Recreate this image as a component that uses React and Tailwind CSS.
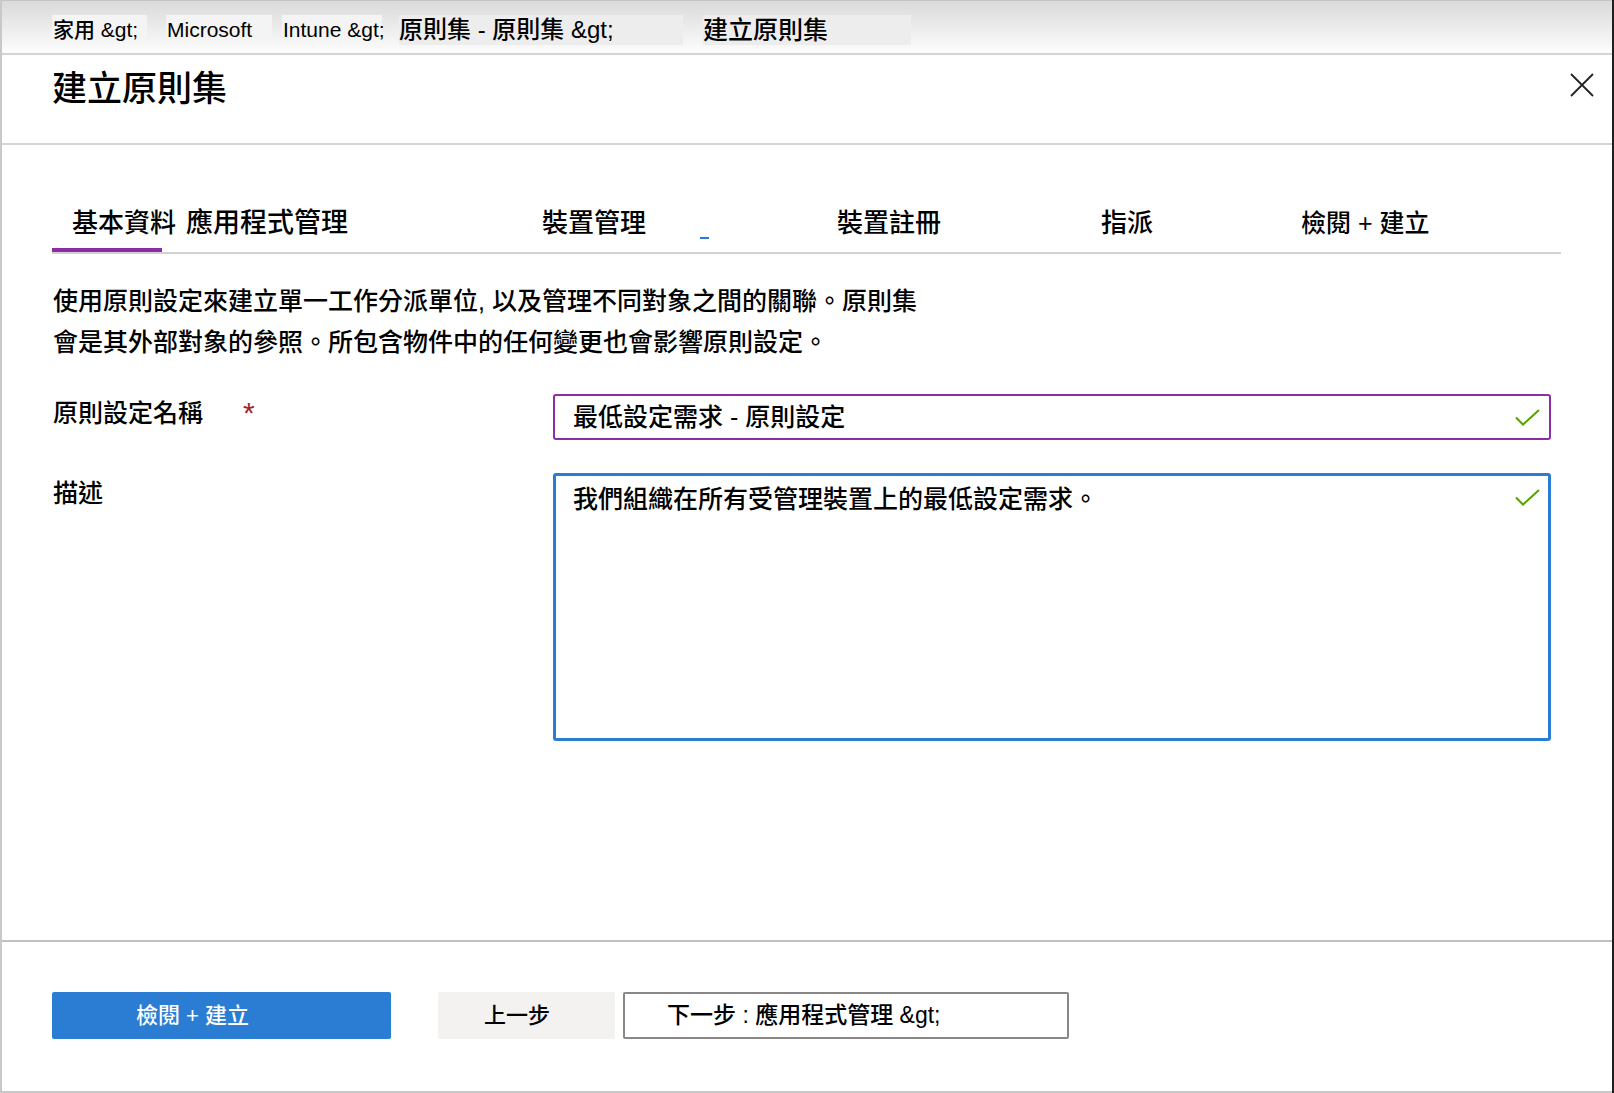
import React from 'react';

const TABS = [
  { label: '基本資料', w: 'w-[110px]', pl: 'pl-[20px]', size: 'text-[26px]', active: true },
  { label: '應用程式管理', w: 'w-[379px]', pl: 'pl-[24px]', size: 'text-[27px]' },
  { label: '裝置管理', w: 'w-[296px]', pl: 'pl-[1px]', size: 'text-[26px]', dash: true },
  { label: '裝置註冊', w: 'w-[264px]', pl: 'pl-0', size: 'text-[26px]' },
  { label: '指派', w: 'w-[200px]', pl: 'pl-0', size: 'text-[26px]' },
  { label: '檢閱 + 建立', w: 'w-[250px]', pl: 'pl-0', size: 'text-[25px]' },
];

function Check() {
  return (
    <svg width="25" height="17" viewBox="0 0 25 17" className="shrink-0">
      <polyline points="1,8.5 8,15.5 24,1" fill="none" stroke="#57a300" strokeWidth="2" />
    </svg>
  );
}

export default function App() {
  return (
    <div className="w-[1614px] h-[1093px] bg-white flex flex-col border-l-2 border-l-[#c8c8c8] border-r-2 border-r-[#1f1f1f] overflow-hidden text-black font-medium font-['Liberation_Sans','Noto_Sans_CJK_TC',sans-serif]">
      {/* Breadcrumb */}
      <div className="h-[55px] shrink-0 border-t border-t-[#c4c4c4] border-b-2 border-b-[#d4d4d4] bg-gradient-to-b from-[#dadada] to-[#fdfdfd] flex items-start pt-[14px] pl-[50px] whitespace-nowrap">
        <span className="w-[95px] h-[23px] bg-[#f4f4f4] text-[21px] leading-[29px] pl-[1px]">家用 &amp;gt;</span>
        <span className="ml-[19px] w-[106px] h-[23px] bg-[#f4f4f4] text-[21px] leading-[30px] pl-[1px]">Microsoft</span>
        <span className="ml-[10px] w-[100px] h-[23px] bg-[#f4f4f4] text-[21px] leading-[29px] pl-[1px]">Intune &amp;gt;</span>
        <span className="ml-[17px] w-[284px] h-[30px] bg-[#ededed] text-[24px] leading-[30px]">原則集 - 原則集 &amp;gt;</span>
        <span className="ml-[20px] w-[208px] h-[30px] bg-[#ededed] text-[25px] leading-[30px]">建立原則集</span>
      </div>

      {/* Title */}
      <div className="h-[90px] shrink-0 border-b-2 border-b-[#d4d4d4] flex items-start justify-between pl-[50px] pr-[18px] pt-[14px]">
        <h1 className="text-[35px] leading-[40px] font-medium">建立原則集</h1>
        <svg width="24" height="24" viewBox="0 0 24 24" className="mt-[4px]">
          <path d="M1 1 L23 23 M23 1 L1 23" stroke="#222" strokeWidth="1.8" fill="none" />
        </svg>
      </div>

      {/* Body */}
      <div className="flex-1 flex flex-col pl-[51px]">
        <div className="mt-[55px] -ml-[1px] w-[1509px] h-[54px] flex border-b-2 border-b-[#d2d2d2] whitespace-nowrap">
          {TABS.map((t) => (
            <div
              key={t.label}
              className={`relative h-[52px] shrink-0 pt-[8px] leading-[30px] ${t.size} ${t.w} ${t.pl} ${t.active ? 'border-b-4 border-b-[#8a2da6]' : ''}`}
            >
              {t.label}
              {t.dash && <span className="absolute left-[159px] top-[37px] w-[9px] h-[2px] bg-[#2b7cd3]" />}
            </div>
          ))}
        </div>

        <p className="mt-[27px] text-[25px] leading-[41px]">
          使用原則設定來建立單一工作分派單位, 以及管理不同對象之間的關聯。原則集
          <br />
          會是其外部對象的參照。所包含物件中的任何變更也會影響原則設定。
        </p>

        <div className="mt-[31px] flex">
          <div className="w-[500px] pt-[4px] flex items-start text-[25px] leading-[30px]">
            <span>原則設定名稱</span>
            <span className="ml-[40px] text-[#a4262c] text-[30px] leading-[30px]">*</span>
          </div>
          <div className="w-[998px] h-[46px] border-2 border-[#8a2da6] rounded-[3px] flex items-center justify-between pl-[18px] pr-[9px]">
            <span className="text-[25px] leading-[30px]">最低設定需求 - 原則設定</span>
            <Check />
          </div>
        </div>

        <div className="mt-[33px] flex">
          <div className="w-[500px] pt-[5px] text-[25px] leading-[30px]">描述</div>
          <div className="w-[998px] h-[268px] border-[3px] border-[#2b7cd3] rounded-[3px] flex items-start justify-between pl-[17px] pr-[8px] pt-[8px]">
            <span className="text-[25px] leading-[30px]">我們組織在所有受管理裝置上的最低設定需求。</span>
            <div className="mt-[5px]">
              <Check />
            </div>
          </div>
        </div>
      </div>

      {/* Footer */}
      <div className="h-[153px] shrink-0 border-t-2 border-t-[#c0c0c0] border-b-2 border-b-[#c8c8c8] pl-[50px] pt-[50px] flex items-start whitespace-nowrap">
        <button className="w-[339px] h-[47px] bg-[#2b7cd3] rounded-[2px] text-white text-[22px] text-left pl-[84px]">
          檢閱 + 建立
        </button>
        <button className="ml-[47px] w-[177px] h-[47px] bg-[#f3f2f1] rounded-[2px] text-[22px] text-left pl-[46px]">
          上一步
        </button>
        <button className="ml-[8px] w-[446px] h-[47px] border-2 border-[#8a8886] rounded-[2px] bg-white text-[23px] text-left pl-[42px]">
          下一步 : 應用程式管理 &amp;gt;
        </button>
      </div>
    </div>
  );
}
